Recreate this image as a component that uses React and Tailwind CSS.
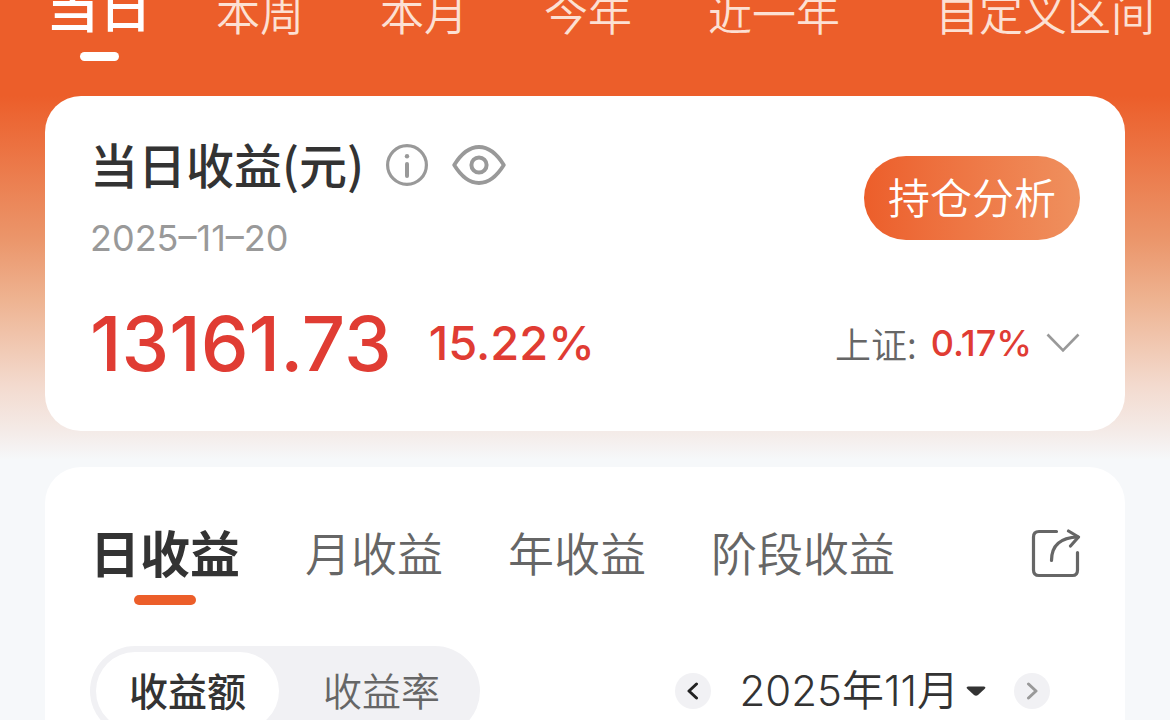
const periods = [
  { id: 'day', label: '当日' },
  { id: 'week', label: '本周' },
  { id: 'month', label: '本月' },
  { id: 'year', label: '今年' },
  { id: 'last-year', label: '近一年' },
  { id: 'custom', label: '自定义区间' },
];

const profitTabs = [
  { id: 'daily', label: '日收益' },
  { id: 'monthly', label: '月收益' },
  { id: 'yearly', label: '年收益' },
  { id: 'stage', label: '阶段收益' },
];

const InfoIcon = () => (
  <svg width="42" height="42" viewBox="0 0 42 42" fill="none" stroke="#999999">
    <circle cx="21" cy="21" r="19.4" strokeWidth="3.2" />
    <path d="M21 20v12" strokeWidth="4" strokeLinecap="round" />
    <circle cx="21" cy="12.3" r="2.2" fill="#999999" stroke="none" />
  </svg>
);

const EyeIcon = () => (
  <svg width="54" height="40" viewBox="0 0 54 40" fill="none" stroke="#999999" strokeWidth="3.8">
    <path d="M2.2 20C9 9 17 2 27 2s18 7 24.8 18C45 31 37 38 27 38S9 31 2.2 20z" strokeLinejoin="round" />
    <circle cx="27" cy="20" r="7.6" strokeWidth="4" />
  </svg>
);

const ShareIcon = () => (
  <svg width="50" height="50" viewBox="0 0 50 50" fill="none" stroke="#666666" strokeWidth="3.2" strokeLinecap="round" strokeLinejoin="round">
    <path d="M25.5 2.5H8Q2.5 2.5 2.5 8V41Q2.5 46.5 8 46.5H41.5Q46.5 46.5 46.5 41V23.500" />
    <path d="M20.5 31.5C20.5 17 29 8.5 47 8" />
    <path d="M37.5 2L47.5 8L39.500 17" />
  </svg>
);

const ChevronDown = () => (
  <svg width="34" height="20" viewBox="0 0 34 20" fill="none" stroke="#999999" strokeWidth="2.6">
    <path d="M1.5 1.5L17 17.5L32.5 1.5" />
  </svg>
);

const PeriodNav = () => (
  <nav className="-mt-[14px] flex h-[110px] items-start gap-[76px] pr-[15px] pl-[46px] whitespace-nowrap">
    {periods.map((period, index) =>
      index === 0 ? (
        <button key={period.id} className="-mr-3 flex flex-col items-center gap-[28px] text-[53px] leading-[38px] font-medium text-white">
          {period.label}
          <span className="h-[9px] w-[39px] rounded-full bg-white" />
        </button>
      ) : (
        <button key={period.id} className="text-[44px] leading-[52px] font-[350] text-[#fce0d3] last:ml-auto">
          {period.label}
        </button>
      )
    )}
  </nav>
);

const SummaryCard = () => (
  <section className="rounded-[36px] bg-white pt-[46px] pr-[45px] pb-[48px] pl-[45px]">
    <div className="flex items-start justify-between">
      <div>
        <div className="flex items-center">
          <h1 className="pb-1 text-[48px] leading-[42px] font-medium text-[#333333]">当日收益(元)</h1>
          <button aria-label="说明" className="ml-[22px]"><InfoIcon /></button>
          <button aria-label="隐藏金额" className="ml-[24px]"><EyeIcon /></button>
        </div>
        <p className="mt-[28px] font-[Inter] text-[36px] leading-[44px] text-[#999999]">2025–11–20</p>
      </div>
      <button className="mt-[14px] h-[84px] rounded-full bg-linear-to-r from-[#ec5e2a] to-[#ef905e] px-[24px] pb-1 text-[42px] leading-[76px] font-[350] text-white">
        持仓分析
      </button>
    </div>

    <div className="mt-[43px] flex items-center justify-between font-[Inter] text-[#e03c33]">
      <div className="flex items-center gap-[37px]">
        <strong className="text-[76px] leading-[80px] font-medium">13161.73</strong>
        <span className="text-[47px] leading-[80px] font-medium">15.22%</span>
      </div>
      <button className="flex items-center">
        <span className="font-['Noto_Sans_CJK_SC',sans-serif] text-[36px] leading-[44px] font-[350] text-[#666666]">上证:</span>
        <span className="mr-[14px] ml-[14px] text-[36px] leading-[44px] font-medium">0.17%</span>
        <ChevronDown />
      </button>
    </div>
  </section>
);

const MonthPicker = () => (
  <div className="flex items-center">
    <button aria-label="上个月" className="flex size-[36px] items-center justify-center rounded-full bg-[#f1f1f4]">
      <svg width="12" height="18" viewBox="0 0 12 18" fill="none" stroke="#222222" strokeWidth="3" strokeLinecap="round" strokeLinejoin="round">
        <path d="M9.5 2L2 9L9.5 16" />
      </svg>
    </button>
    <button className="mr-[28px] ml-[29px] flex items-center gap-[7px] font-[Inter,'Noto_Sans_CJK_SC',sans-serif] text-[42px] leading-[48px] font-[350] text-[#333333]">
      2025年11月
      <svg width="20" height="10" viewBox="0 0 20 10" fill="#333333">
        <path d="M2 0.5H18Q20.5 1 18.5 3L12 9Q10 10.5 8 9L1.5 3Q-0.5 1 2 0.5z" />
      </svg>
    </button>
    <button aria-label="下个月" className="flex size-[36px] items-center justify-center rounded-full bg-[#f1f1f4]">
      <svg width="12" height="18" viewBox="0 0 12 18" fill="none" stroke="#999999" strokeWidth="3" strokeLinecap="round" strokeLinejoin="round">
        <path d="M2.5 2L10 9L2.5 16" />
      </svg>
    </button>
  </div>
);

const ProfitCard = () => (
  <section className="mt-[36px] rounded-t-[36px] bg-white pt-[62px] pr-[44px] pb-[60px] pl-[45px]">
    <div className="flex items-start justify-between">
      <div className="flex items-start gap-[65px] whitespace-nowrap">
        {profitTabs.map((tab, index) =>
          index === 0 ? (
            <button key={tab.id} className="flex flex-col items-center gap-[22px] text-[50px] leading-[44px] font-bold text-[#333333]">
              {tab.label}
              <span className="h-[10px] w-[62px] rounded-full bg-[#ec5e2a]" />
            </button>
          ) : (
            <button key={tab.id} className="text-[46px] leading-[44px] font-[350] text-[#666666]">
              {tab.label}
            </button>
          )
        )}
      </div>
      <button aria-label="分享"><ShareIcon /></button>
    </div>

    <div className="mt-[41px] flex items-center justify-between pr-[31px]">
      <div className="flex rounded-full bg-[#f1f1f4] p-[6px] text-[39px] leading-[74px]">
        <button className="rounded-full bg-white px-[33px] pb-1 font-medium text-[#333333]">收益额</button>
        <button className="pr-[34px] pb-1 pl-[44px] font-[350] text-[#666666]">收益率</button>
      </div>
      <MonthPicker />
    </div>
  </section>
);

const App = () => {
  return (
    <div className="h-screen overflow-hidden bg-[#f6f8fa] font-['Noto_Sans_CJK_SC',sans-serif]">
      <main className="flow-root bg-[linear-gradient(180deg,#ec5e2a_96px,#eb966b_240px,#eeb391_300px,#f3dace_385px,#f4ebe8_432px,#f6f8fa_460px)]">
        <PeriodNav />
        <div className="px-[45px]">
          <SummaryCard />
          <ProfitCard />
        </div>
      </main>
    </div>
  );
};

export default App;
